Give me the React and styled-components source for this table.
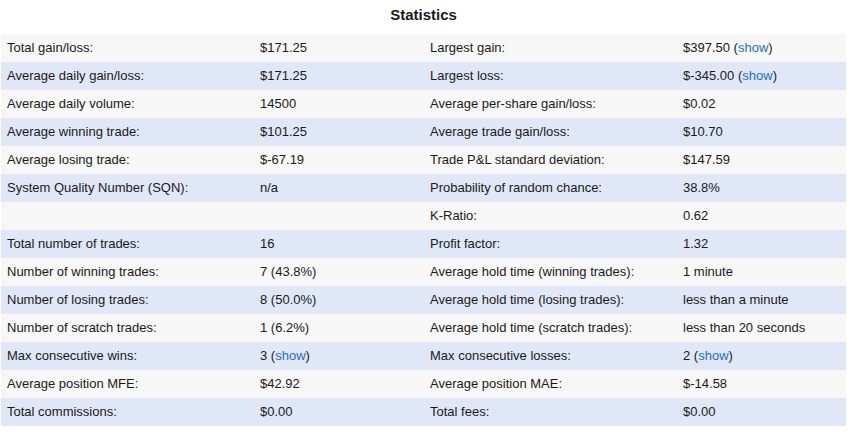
import React from 'react'
import styled, { createGlobalStyle } from 'styled-components'

const GlobalStyle = createGlobalStyle`
  body {
    margin: 0;
    background: #fff;
    font-family: "Liberation Sans", Arial, sans-serif;
    color: #1a1a1a;
  }
`

const Wrapper = styled.div`
  width: 845px;
  margin-left: 1px;
`

const Title = styled.h2`
  margin: 0;
  height: 34px;
  line-height: 30px;
  text-align: center;
  font-size: 15px;
  font-weight: bold;
`

const Table = styled.div`
  display: grid;
  grid-template-columns: 253px 170px 253px 169px;
  font-size: 13px;
`

const Row = styled.div`
  display: contents;
  & > div {
    background: ${(p) => (p.$alt ? '#e0e7f6' : '#f7f7f7')};
  }
`

const Cell = styled.div`
  height: 28px;
  line-height: 28px;
  padding-left: 6px;
  white-space: nowrap;
`

const Show = styled.a`
  color: #1f6fbf;
  text-decoration: none;
  cursor: pointer;
`

const withShow = (v) => (
  <>
    {v} (<Show>show</Show>)
  </>
)

const rows = [
  ['Total gain/loss:', '$171.25', 'Largest gain:', withShow('$397.50')],
  ['Average daily gain/loss:', '$171.25', 'Largest loss:', withShow('$-345.00')],
  ['Average daily volume:', '14500', 'Average per-share gain/loss:', '$0.02'],
  ['Average winning trade:', '$101.25', 'Average trade gain/loss:', '$10.70'],
  ['Average losing trade:', '$-67.19', 'Trade P&L standard deviation:', '$147.59'],
  ['System Quality Number (SQN):', 'n/a', 'Probability of random chance:', '38.8%'],
  ['', '', 'K-Ratio:', '0.62'],
  ['Total number of trades:', '16', 'Profit factor:', '1.32'],
  ['Number of winning trades:', '7 (43.8%)', 'Average hold time (winning trades):', '1 minute'],
  ['Number of losing trades:', '8 (50.0%)', 'Average hold time (losing trades):', 'less than a minute'],
  ['Number of scratch trades:', '1 (6.2%)', 'Average hold time (scratch trades):', 'less than 20 seconds'],
  ['Max consecutive wins:', withShow('3'), 'Max consecutive losses:', withShow('2')],
  ['Average position MFE:', '$42.92', 'Average position MAE:', '$-14.58'],
  ['Total commissions:', '$0.00', 'Total fees:', '$0.00'],
]

export default function App() {
  return (
    <Wrapper>
      <GlobalStyle />
      <Title>Statistics</Title>
      <Table>
        {rows.map((r, i) => (
          <Row key={i} $alt={i % 2 === 1}>
            {r.map((c, j) => (
              <Cell key={j}>{c}</Cell>
            ))}
          </Row>
        ))}
      </Table>
    </Wrapper>
  )
}
